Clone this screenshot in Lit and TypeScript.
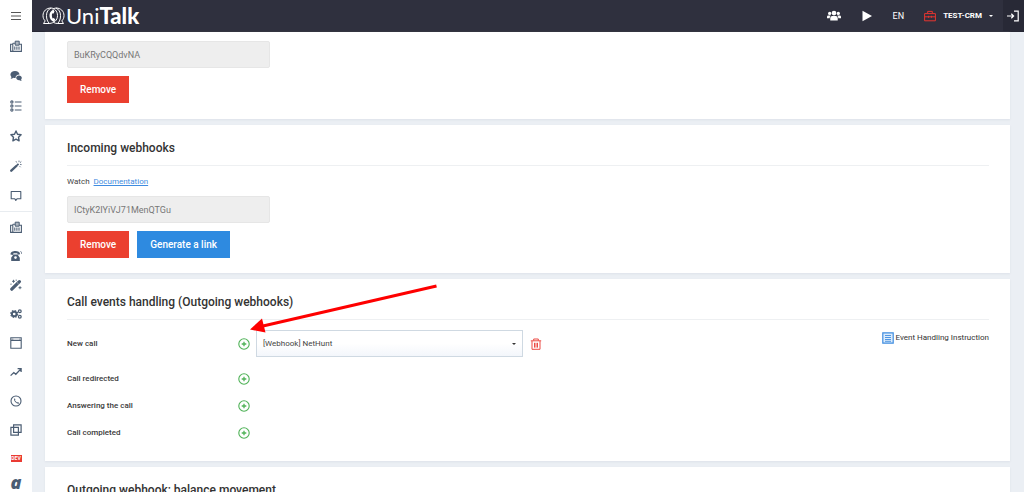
import { LitElement, html, css, svg, nothing } from "lit";
import { customElement, property } from "lit/decorators.js";

const icons: Record<string, unknown> = {
  menu: svg`<path d="M1 2.5h10M1 6h10M1 9.500h10" fill="none" stroke="currentColor" stroke-width="1"/>`,
  fax: svg`<path d="M.6 4.200h2.200v7.200H.6zM2.800 3.200h2.400M9.200 4.200h2.200v7.200H2.800V3.200" fill="none" stroke="currentColor" stroke-width="1.100"/><path d="M5.200 1.200h4v4h-4z" fill="currentColor" fill-opacity=".45" stroke="currentColor" stroke-width="1"/><path d="M4.800 6.400v3.400M6.900 6.400v3.400M9 6.400v3.400" stroke="currentColor" stroke-width="1.100"/>`,
  chat: svg`<path d="M5 .9c2.600 0 4.500 1.500 4.500 3.600C7 4.600 5.500 6 5.500 8 4.700 8.100 4 8 3.300 7.800 2.600 8.500 1.600 8.900.6 8.800c.5-.5.8-1.100.8-1.800C.8 6.300.4 5.500.4 4.500.4 2.400 2.400.9 5 .9z" fill="currentColor"/><path d="M9 5.400c1.600 0 2.800 1 2.800 2.400 0 .6-.3 1.200-.7 1.600 0 .6.2 1.100.6 1.500-.8 0-1.500-.2-2.100-.7C7.700 10.400 6.200 9.400 6.200 7.800 6.200 6.400 7.400 5.400 9 5.400z" fill="currentColor"/>`,
  list: svg`<path d="M4.800 2h6.700M4.800 6h6.700M4.800 10h6.700" stroke="currentColor" stroke-width="1.200"/><g fill="none" stroke="currentColor" stroke-width="1.100"><circle cx="1.900" cy="2" r="1.100"/><circle cx="1.900" cy="6" r="1.100"/><circle cx="1.900" cy="10" r="1.100"/></g>`,
  star: svg`<path d="M6 1l1.500 3.200 3.600.5-2.600 2.500.6 3.600L6 9.100l-3.100 1.700.6-3.600L.9 4.700l3.600-.5z" fill="none" stroke="currentColor" stroke-width="1.400" stroke-linejoin="round"/>`,
  wand: svg`<path d="M1.300 10.700l5-4.700" stroke="currentColor" stroke-width="2.400" stroke-linecap="round"/><path d="M7 5.300l1.500-1.400" stroke="currentColor" stroke-width="1.800"/><path d="M6 1.200l.6 1.300M9 .6v1.600M11.300 1.500L10 2.700M11.600 4.600l-1.600-.2M10.600 7.200l-1-1" stroke="currentColor" stroke-width=".8"/>`,
  comment: svg`<path d="M1.200 1.500h9.600v7.200H7.200l-1.400 1.800-1-1.800H1.200z" fill="none" stroke="currentColor" stroke-width="1.100" stroke-linejoin="round"/>`,
  phone: svg`<path d="M.5 4.400C.5 1.900 2.800 1 5.400 1s4.700.9 4.700 3.200L7.700 4.800 7.300 3.200H3.500L3.100 5z" fill="currentColor"/><path d="M3.400 4.600h4.200l2.200 3.200v3.200H1.200V7.800z" fill="currentColor"/><circle cx="5.500" cy="7.600" r="1.300" fill="#fff"/><path d="M10.500 1.200q1.200.8 1.100 2.600" fill="none" stroke="currentColor" stroke-width=".8"/>`,
  magic: svg`<path d="M1.800 10.200l7.600-7.600" stroke="currentColor" stroke-width="3.200" stroke-linecap="round"/><path d="M7.200 3.600l1.300 1.300" stroke="#fff" stroke-width=".6"/><path d="M3.500.8v3M2 2.300h3M1 4.600v1.200M10 7.200v3M8.500 8.700h3M6.200.6v1.200" stroke="currentColor" stroke-width=".9"/>`,
  gears: svg`<circle cx="4.200" cy="6" r="2.300" fill="none" stroke="currentColor" stroke-width="1.900"/><circle cx="4.200" cy="6" r="3.500" fill="none" stroke="currentColor" stroke-width="1.100" stroke-dasharray="1.500 1.250"/><g fill="none" stroke="currentColor" stroke-width="1.200"><circle cx="9.800" cy="3.300" r="1.400"/><circle cx="9.800" cy="8.700" r="1.400"/></g>`,
  window: svg`<path d="M.8.8h10.400v10.400H.8zM.8 3.400h10.400" fill="none" stroke="currentColor" stroke-width="1.100"/><path d="M1.800 2.100h1.600M9.200 2.100h1" stroke="currentColor" stroke-width=".7"/>`,
  trend: svg`<path d="M.6 9.600l3.200-3 2 1.700 4.900-5.200M7.600 2.600h3.500v3.500" fill="none" stroke="currentColor" stroke-width="1.300"/>`,
  clock: svg`<circle cx="6" cy="6" r="5" fill="none" stroke="currentColor" stroke-width="1.100"/><path d="M4.500 3.200c-1 1-.2 2.800 1 4s2.800 2 3.800 1L8 6.900l-.9.500C6.200 7 5.300 6 4.900 5.100l.6-.8z" fill="currentColor"/>`,
  copy: svg`<path d="M3.600.9h7.500v7.500H3.600z" fill="none" stroke="currentColor" stroke-width="1.200"/><path d="M.9 3.300h7.500v7.800H.9z" fill="none" stroke="currentColor" stroke-width="1.200"/>`,
  plus: svg`<circle cx="6" cy="6" r="5.200" fill="none" stroke="currentColor" stroke-width="1.100"/><path d="M6 3.700v4.600M3.700 6h4.600" stroke="currentColor" stroke-width="1.300"/>`,
  trash: svg`<path d="M.8 2.800h10.400M3.700 2.600V1h4.600v1.600M2 3v8.300h8V3M4.500 4.800v4.800M6 4.800v4.800M7.500 4.800v4.800" fill="none" stroke="currentColor" stroke-width="1"/>`,
  doc: svg`<path d="M.8.8h10.400v10.400H.8z" fill="#dcecfb" stroke="currentColor" stroke-width="1.200"/><path d="M3 3.500h6M3 5.500h6M3 7.500h6M3 9.300h6" stroke="currentColor" stroke-width=".9"/>`,
  users: svg`<g fill="currentColor"><circle cx="2.300" cy="3.800" r="1.400"/><circle cx="9.700" cy="3.800" r="1.400"/><circle cx="6" cy="3.500" r="2"/><path d="M0 8V6.600q0-1.100 1.200-1.100h1.900Q2.300 6.300 2.300 8zM12 8V6.600q0-1.100-1.200-1.100H8.900Q9.700 6.300 9.700 8zM2.800 9.800V7.700Q2.800 6 4.500 6h3Q9.200 6 9.200 7.700v2.100z"/></g>`,
  play: svg`<path d="M1.500.8L11 6l-9.500 5.200z" fill="currentColor"/>`,
  briefcase: svg`<path d="M.6 3.600h10.800v7.200H.6zM3.700 3.400V1.400h4.600v2M.6 6.800h10.800M4.600 5.800v2M7.400 5.800v2" fill="none" stroke="currentColor" stroke-width="1"/>`,
  exit: svg`<path d="M0 6h6.500M4.300 3.800L6.600 6 4.300 8.200M7 1.100h4.200v9.800H7" fill="none" stroke="currentColor" stroke-width="1.200"/>`,
};

const icon = (name: string) =>
  html`<svg class="icon" viewBox="0 0 12 12" aria-hidden="true">${icons[name]}</svg>`;

const base = css`
  * { box-sizing: border-box; }
  button, input, select { font: inherit; color: inherit; margin: 0; }
  .icon { display: block; width: 12px; height: 12px; flex: none; }
  .ghost { border: 0; background: none; padding: 0; display: flex; align-items: center; justify-content: center; cursor: pointer; }
  a { color: inherit; text-decoration: none; }
`;

@customElement("side-nav")
export class SideNav extends LitElement {
  static styles = [base, css`
    :host { display: flex; flex-direction: column; background: #fff; color: #4b5d73; }
    .toggle { height: 31px; color: #555; }
    nav { display: flex; flex-direction: column; }
    .main { border-bottom: 1px solid #e8ecf0; }
    .item { display: flex; align-items: center; justify-content: center; height: 29px; }
    .main .item { height: 30px; }
    .dev { background: #ea3b33; color: #fff; font-size: 5px; line-height: 7px; font-weight: 700; width: 11px; text-align: center; }
    .brand { height: 18px; font: italic 800 18px/18px "Open Sans", sans-serif; }
  `];

  render() {
    const link = (name: string) =>
      html`<a class="item" href="#${name}" aria-label=${name}>${icon(name)}</a>`;
    return html`
      <button class="ghost toggle" aria-label="menu">${icon("menu")}</button>
      <nav class="main">${["fax", "chat", "list", "star", "wand", "comment"].map(link)}</nav>
      <nav>
        ${["fax", "phone", "magic", "gears", "window", "trend", "clock", "copy"].map(link)}
        <a class="item" href="#dev"><span class="dev">DEV</span></a>
        <a class="item brand" href="#a">a</a>
      </nav>
    `;
  }
}

@customElement("top-bar")
export class TopBar extends LitElement {
  static styles = [base, css`
    :host { display: flex; align-items: stretch; height: 32px; background: #2f303e; color: #fff; border-bottom: 1px solid #262733; }
    .logo { display: flex; align-items: center; gap: 1px; margin-left: 10px; margin-right: auto; font: 400 22px/30px Lato, sans-serif; }
    .logo svg { width: 23px; height: 18px; }
    .logo b { font-weight: 900; }
    .tools { display: flex; align-items: center; gap: 20px; padding-right: 10px; font-size: 9px; }
    .users .icon { width: 14px; height: 14px; }
    .account { gap: 7px; font-weight: 700; font-size: 8px; }
    .account .icon { color: #e5352f; }
    .caret { border: 2px solid transparent; border-top-color: currentColor; border-bottom: 0; }
    .exit { width: 21px; padding-right: 2px; background: #282936; }
  `];

  render() {
    return html`
      <a class="logo" href="#home">
        <svg viewBox="0 0 23 18" aria-hidden="true">
          <g fill="none" stroke="#fff" stroke-width="1">
            <path d="M9 1C4.500 1 1 4 1 8.600c0 2.200.8 4 2.200 5.300L1.500 16.500h6"/>
            <path d="M7.500 16.500C5.300 14.500 4.500 12 4.500 8.600 4.500 5 6 2.500 9 1"/>
            <path d="M14 1c4.500 0 8 3 8 7.600 0 2.200-.8 4-2.200 5.300l1.700 2.600h-6"/>
            <path d="M15.500 16.500c2.200-2 3-4.500 3-7.900C18.500 5 17 2.500 14 1"/>
            <path d="M9 1c3 0 6.500 2.800 6.500 7.600S12 16 7.500 16.500M14 1c-1.500.2-2.500.6-3.400 1.200M15.500 16.500c-1.500 0-2.800-.4-3.800-1"/>
          </g>
          <path d="M11.500 2.500C8.500 4 7.300 6.200 7.500 9c.2 2.700 1.800 5 4.500 6l1.300-2.600-1.500-1.300-1.200.5C9.800 9.800 9.700 8 10.100 6.400l1.500.1.900-2z" fill="#fff"/>
        </svg>
        <span>Uni<b>Talk</b></span>
      </a>
      <div class="tools">
        <button class="ghost users" aria-label="users">${icon("users")}</button>
        <button class="ghost play" aria-label="play">${icon("play")}</button>
        <button class="ghost">EN</button>
        <button class="ghost account">${icon("briefcase")}TEST-CRM<span class="caret"></span></button>
      </div>
      <button class="ghost exit" aria-label="exit">${icon("exit")}</button>
    `;
  }
}

@customElement("event-row")
export class EventRow extends LitElement {
  @property() name = "";
  @property() webhook = "";

  static styles = [base, css`
    :host { display: flex; align-items: center; height: 27px; }
    .name { width: 170px; font-weight: 500; color: #3a3a3a; }
    .add { width: 13px; color: #4fb257; }
    .pick { position: relative; width: 267px; margin: 0 7px 0 6px; }
    select { appearance: none; display: block; width: 100%; height: 27px; padding: 0 20px 0 6px; border: 1px solid #cfd9e2; border-radius: 0; background: linear-gradient(#fff 50%, #f3f6fb); color: #444; }
    .caret { position: absolute; right: 7px; top: 13px; border: 2px solid transparent; border-top-color: #333; border-bottom: 0; pointer-events: none; }
    .remove { color: #ec4a44; }
  `];

  render() {
    return html`
      <label class="name" for="hook">${this.name}</label>
      <button class="ghost add" id=${this.webhook ? "add" : "hook"} aria-label="Add">${icon("plus")}</button>
      ${this.webhook
        ? html`
            <div class="pick">
              <select id="hook"><option>${this.webhook}</option></select>
              <span class="caret"></span>
            </div>
            <button class="ghost remove" aria-label="Remove">${icon("trash")}</button>`
        : nothing}
    `;
  }
}

@customElement("app-root")
export class AppRoot extends LitElement {
  static styles = [base, css`
    :host { display: grid; grid-template-columns: 32px 1fr; height: 100vh; overflow: hidden; background: #ebeff4; font: 8px/12px Roboto, sans-serif; color: #444; }
    .page { display: flex; flex-direction: column; min-width: 0; }
    top-bar { flex: none; }
    main { display: flex; flex-direction: column; gap: 6px; padding: 0 14px 0 13px; }
    .card { position: relative; padding: 15px 21px 15px 22px; background: #fff; box-shadow: 0 1px 2px #dde2e9; }
    .card.first { padding-top: 9px; padding-bottom: 16px; }
    h2 { margin: 0 0 10px; padding-bottom: 9px; border-bottom: 1px solid #eef0f2; font-size: 12px; line-height: 16px; font-weight: 500; color: #333; }
    .watch { display: flex; gap: 4px; margin: 0 0 8px; }
    .watch a { color: #3f8ce0; text-decoration: underline; }
    .token { display: block; width: 203px; height: 27px; padding: 0 6px; border: 1px solid #e6e6e6; border-radius: 2px; background: #eee; color: #777; font-size: 9px; margin-bottom: 8px; }
    .actions { display: flex; gap: 8px; }
    .btn { height: 27px; padding: 0 13px; border: 0; color: #fff; font-size: 10px; font-weight: 500; background: #eb402f; cursor: pointer; }
    .btn.blue { background: #2e8ae0; }
    .columns { display: flex; justify-content: space-between; align-items: flex-start; }
    .first-row { margin-bottom: 8px; }
    .help { display: flex; align-items: center; gap: 2px; margin-top: 2px; color: #333; }
    .help .icon { color: #3f8ce0; }
    .arrow { position: absolute; left: 204px; top: 4px; width: 190px; height: 56px; pointer-events: none; }
  `];

  render() {
    return html`
      <side-nav></side-nav>
      <div class="page">
        <top-bar></top-bar>
        <main>
          <section class="card first">
            <input class="token" aria-label="Key" readonly value="BuKRyCQQdvNA" />
            <div class="actions"><button class="btn">Remove</button></div>
          </section>
          <section class="card">
            <h2>Incoming webhooks</h2>
            <p class="watch">Watch <a href="#docs">Documentation</a></p>
            <input class="token" aria-label="Token" readonly value="ICtyK2IYiVJ71MenQTGu" />
            <div class="actions">
              <button class="btn">Remove</button>
              <button class="btn blue">Generate a link</button>
            </div>
          </section>
          <section class="card">
            <h2>Call events handling (Outgoing webhooks)</h2>
            <div class="columns">
              <div>
                <event-row class="first-row" name="New call" webhook="[Webhook] NetHunt"></event-row>
                <event-row name="Call redirected"></event-row>
                <event-row name="Answering the call"></event-row>
                <event-row name="Call completed"></event-row>
              </div>
              <a class="help" href="#help">${icon("doc")}Event Handling Instruction</a>
            </div>
            <svg class="arrow" viewBox="0 0 190 56" aria-hidden="true">
              <path d="M187.500 3L14 43" stroke="#fe0000" stroke-width="3" />
              <path d="M1 46.500L13 35.500l3.500 14z" fill="#fe0000" />
            </svg>
          </section>
          <section class="card">
            <h2>Outgoing webhook: balance movement</h2>
          </section>
        </main>
      </div>
    `;
  }
}
